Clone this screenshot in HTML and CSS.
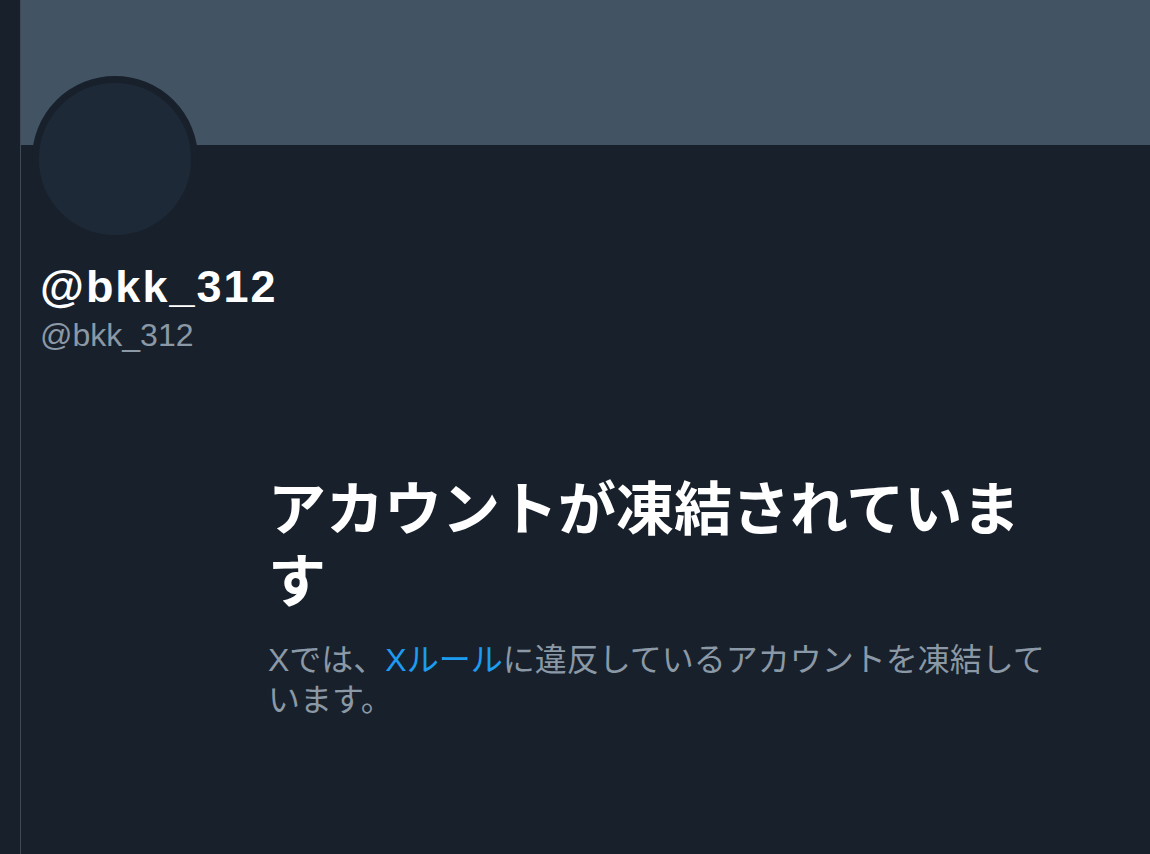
FILE: index.html
```html
<!DOCTYPE html>
<html lang="ja">
<head>
<meta charset="utf-8">
<link rel="stylesheet" href="styles.css">
</head>
<body>
<div class="page">
  <div class="gutter"></div>
  <main class="main">
    <div class="banner"></div>
    <div class="profile">
      <div class="avatar"></div>
      <div class="name">@bkk_312</div>
      <div class="handle">@bkk_312</div>
    </div>
    <section class="notice">
      <h1 class="notice-title">アカウントが凍結されています</h1>
      <p class="notice-text">Xでは、<a class="link" href="#">Xルール</a>に違反しているアカウントを凍結しています。</p>
    </section>
  </main>
</div>
</body>
</html>
```
FILE: styles.css
```css
html, body {
  margin: 0;
  padding: 0;
  background: #17202b;
}
body {
  font-family: "Liberation Sans", "Noto Sans CJK JP", sans-serif;
  color: #ffffff;
}
.page {
  display: flex;
  width: 1150px;
  height: 854px;
  overflow: hidden;
}
.gutter {
  width: 20px;
  flex: none;
  background: #17202b;
  border-right: 1px solid #3d4a56;
}
.main {
  flex: 1;
  background: #17202b;
  display: flex;
  flex-direction: column;
}
.banner {
  height: 145px;
  background: #425364;
  flex: none;
}
.profile {
  padding: 0 0 0 11px;
  display: flex;
  flex-direction: column;
}
.avatar {
  width: 152px;
  height: 152px;
  border-radius: 50%;
  background: #1e2938;
  border: 7px solid #17202b;
  margin-top: -69px;
}
.name {
  margin-top: 19px;
  margin-left: 8px;
  font-size: 45px;
  font-weight: 700;
  letter-spacing: 2px;
  line-height: 52px;
  color: #ffffff;
}
.handle {
  margin-left: 8px;
  margin-top: 1px;
  font-size: 32px;
  line-height: 42px;
  color: #8b98a5;
}
.notice {
  margin-left: 247px;
  margin-top: 113px;
  width: 795px;
}
.notice-title {
  margin: 0;
  font-family: "Noto Sans CJK JP", sans-serif;
  font-size: 58px;
  font-weight: 700;
  line-height: 72px;
  color: #ffffff;
}
.notice-text {
  margin: 27px 0 0 0;
  font-family: "Liberation Sans", "Noto Sans CJK JP", sans-serif;
  font-size: 32px;
  line-height: 40px;
  color: #8b98a5;
}
.link {
  color: #1d9bf0;
  text-decoration: none;
}
```
